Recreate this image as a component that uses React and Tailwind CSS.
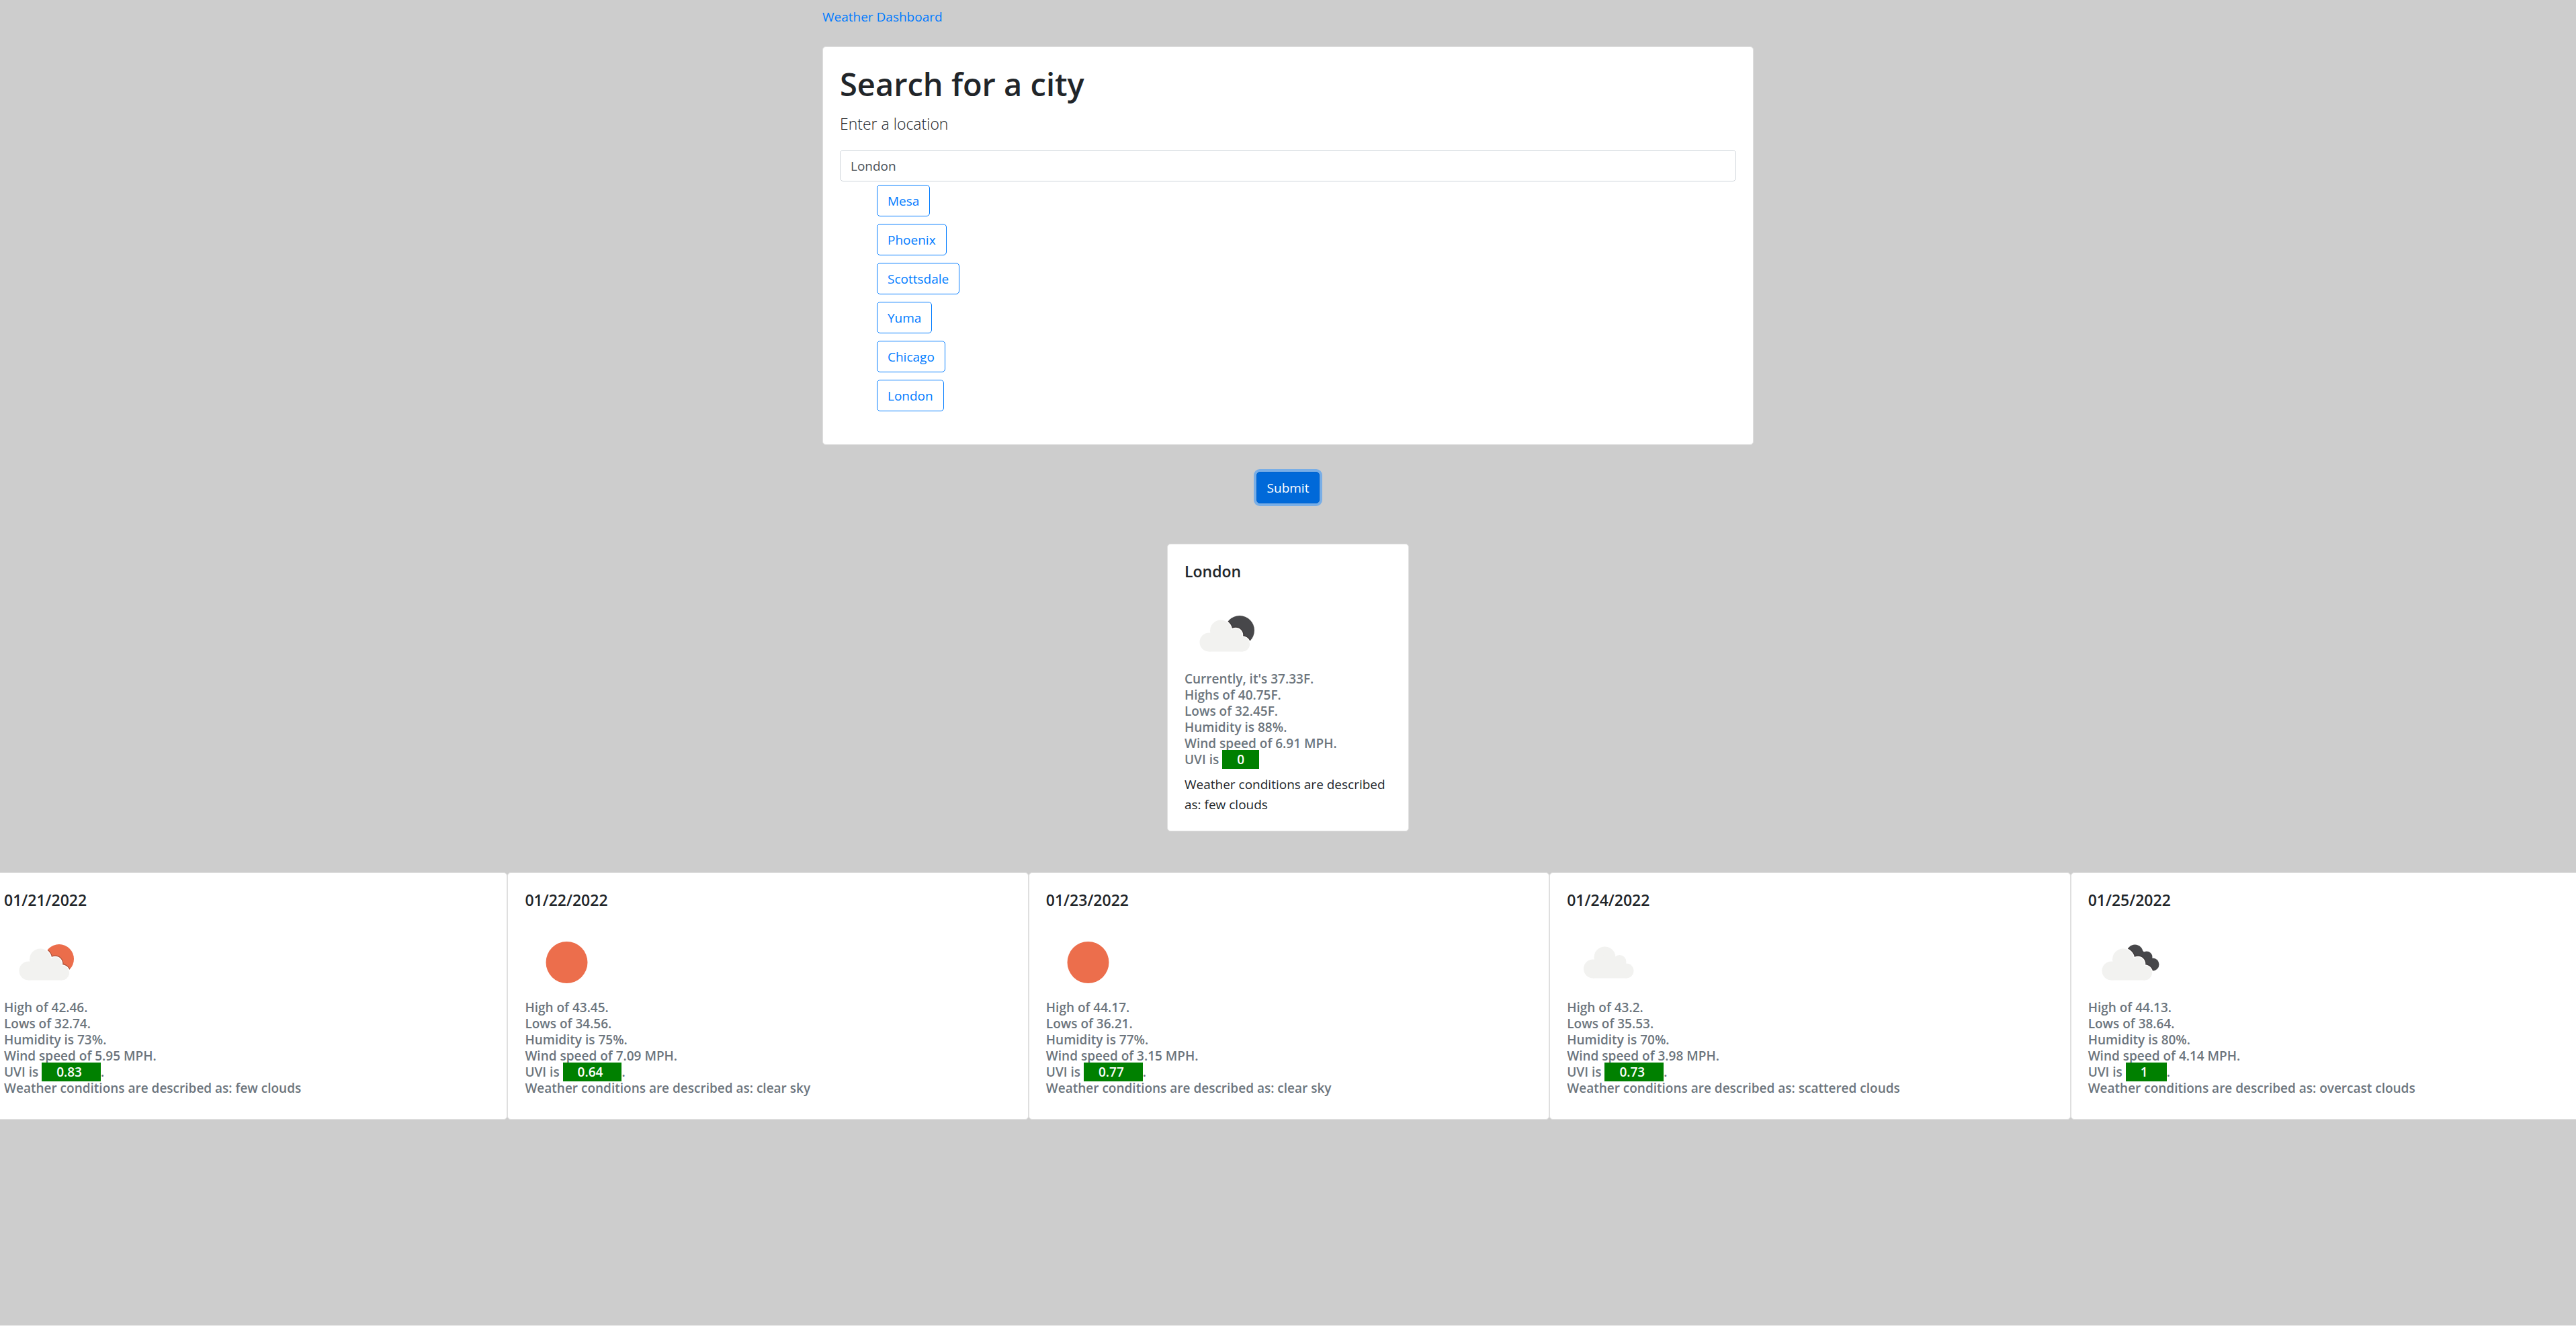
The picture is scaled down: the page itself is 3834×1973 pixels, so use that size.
const FORECAST = [
  { date: "01/21/2022", icon: "few-day", high: "42.46", low: "32.74", humidity: 73, wind: "5.95", uvi: "0.83", text: "few clouds" },
  { date: "01/22/2022", icon: "clear", high: "43.45", low: "34.56", humidity: 75, wind: "7.09", uvi: "0.64", text: "clear sky" },
  { date: "01/23/2022", icon: "clear", high: "44.17", low: "36.21", humidity: 77, wind: "3.15", uvi: "0.77", text: "clear sky" },
  { date: "01/24/2022", icon: "scattered", high: "43.2", low: "35.53", humidity: 70, wind: "3.98", uvi: "0.73", text: "scattered clouds" },
  { date: "01/25/2022", icon: "overcast", high: "44.13", low: "38.64", humidity: 80, wind: "4.14", uvi: "1", text: "overcast clouds" },
];

const CITIES = ["Mesa", "Phoenix", "Scottsdale", "Yuma", "Chicago", "London"];

const CARD = "rounded-[5px] border border-[#dfdfdf] bg-white";

function CloudShape({ fill, stroke, strokeWidth }) {
  return (
    <g fill={fill} stroke={stroke} strokeWidth={strokeWidth}>
      <circle cx="14" cy="33" r="14" />
      <circle cx="31.5" cy="16" r="16" />
      <circle cx="53.5" cy="22.5" r="10" />
      <circle cx="63.5" cy="36" r="11" />
      <path d="M14 47H64V26L31 12L14 24Z" />
    </g>
  );
}

/* Front cloud; its soft shadow is clipped to the shape behind it. */
function FrontCloud({ x, y, clip }) {
  const place = `translate(${x} ${y})`;
  return (
    <>
      <g clipPath={`url(#${clip})`}>
        <g transform={place} opacity="0.35">
          <CloudShape fill="#2a1a16" stroke="#2a1a16" strokeWidth="5" />
        </g>
      </g>
      <g transform={place}>
        <CloudShape fill="#ffffff" stroke="#ffffff" strokeWidth="2.5" />
        <CloudShape fill="#f2f2f0" />
      </g>
    </>
  );
}

function BackCloud() {
  return (
    <>
      <circle cx="69.5" cy="48.5" r="12" />
      <circle cx="87" cy="55" r="8.5" />
      <circle cx="96" cy="66" r="9.5" />
      <path d="M62 48L75 40L88 52L99 66L95 75.500L78 75Z" />
    </>
  );
}

function WeatherIcon({ name }) {
  return (
    <svg viewBox="0 0 125 125" className="h-[118px] w-[125px]" preserveAspectRatio="xMinYMin slice" aria-hidden="true">
      {name === "clear" && <circle cx="62.5" cy="63" r="31" fill="#ec6e4c" />}
      {(name === "few-day" || name === "few-night") && (
        <>
          <clipPath id="disc">
            <circle cx="82" cy="58" r="22" />
          </clipPath>
          <circle cx="82" cy="58" r="22" fill={name === "few-day" ? "#ec6e4c" : "#48484a"} />
          <FrontCloud x="22.5" y="42.5" clip="disc" />
        </>
      )}
      {name === "scattered" && (
        <g transform="translate(25 39.5)">
          <CloudShape fill="#f2f2f0" />
        </g>
      )}
      {name === "overcast" && (
        <>
          <clipPath id="back-cloud">
            <circle cx="69.5" cy="48.5" r="12" />
            <circle cx="87" cy="55" r="8.5" />
            <circle cx="96" cy="66" r="9.5" />
          </clipPath>
          <g fill="#48484a">
            <BackCloud />
          </g>
          <FrontCloud x="20.5" y="42.5" clip="back-cloud" />
        </>
      )}
    </svg>
  );
}

function Uvi({ value, className }) {
  return <span className={`bg-[#008000] py-px pl-[22px] text-white ${className}`}>{value}</span>;
}

function ForecastCard({ day }) {
  return (
    <article className={`${CARD} flex-1 px-[25px] pt-[25px] pb-[34px]`}>
      <h2 className="mb-[15px] text-[23px] leading-[30px] font-semibold">{day.date}</h2>
      <WeatherIcon name={day.icon} />
      <p className="text-[19px] leading-6 font-semibold text-[#6c757d]">
        High of {day.high}.<br />
        Lows of {day.low}.<br />
        Humidity is {day.humidity}%.<br />
        Wind speed of {day.wind} MPH.<br />
        UVI is <Uvi value={day.uvi} className="pr-[28px]" />.<br />
        Weather conditions are described as: {day.text}
      </p>
    </article>
  );
}

export default function App() {
  return (
    <div className="min-h-screen overflow-hidden border-b border-[#f0f0f0] bg-[#cdcdcd] font-['Open_Sans','Noto_Sans',sans-serif] text-[19px] leading-[30px] text-[#212529]">
      <main className="mx-auto max-w-[1424px] px-[19px]">
        <nav className="pt-[10px] pb-[29px]">
          <a href="#" className="text-[#007bff]">Weather Dashboard</a>
        </nav>
        <section className={`${CARD} px-[25px] pt-[25px] pb-[49px]`}>
          <h1 className="mb-[10px] text-[47px] leading-[60px] font-semibold">Search for a city</h1>
          <label htmlFor="city" className="mb-5 block text-[23px] leading-[38px] font-light">Enter a location</label>
          <input
            id="city"
            type="text"
            defaultValue="London"
            className="block h-[47px] w-full rounded-[5px] border border-[#ced4da] bg-white px-[15px] text-[#495057]"
          />
          <ul className="mt-[5px] flex flex-col items-start gap-[11px] pl-[55px]">
            {CITIES.map((city) => (
              <li key={city}>
                <button type="button" className="block h-[47px] rounded-[5px] border border-[#007bff] px-[15px] text-[#007bff]">
                  {city}
                </button>
              </li>
            ))}
          </ul>
        </section>
        <div className="mt-10 flex justify-center">
          <button type="button" className="h-[47px] rounded-[5px] border border-[#0062cc] bg-[#0069d9] px-[15px] text-white ring-4 ring-[#268fff]/50">
            Submit
          </button>
        </div>
      </main>

      <article className={`${CARD} mx-auto mt-[60px] w-[360px] px-[25px] pt-[25px] pb-6`}>
        <h2 className="mb-[15px] text-[23px] leading-[30px] font-semibold">London</h2>
        <WeatherIcon name="few-night" />
        <p className="mb-[10px] text-[19px] leading-6 font-semibold text-[#6c757d]">
          Currently, it's 37.33F.<br />
          Highs of 40.75F.<br />
          Lows of 32.45F.<br />
          Humidity is 88%.<br />
          Wind speed of 6.91 MPH.<br />
          UVI is <Uvi value="0" className="pr-[22px]" />
        </p>
        <p>Weather conditions are described as: few clouds</p>
      </article>

      <section className="mt-[61px] -mr-[23px] -ml-5 flex">
        {FORECAST.map((day) => (
          <ForecastCard key={day.date} day={day} />
        ))}
      </section>
    </div>
  );
}
